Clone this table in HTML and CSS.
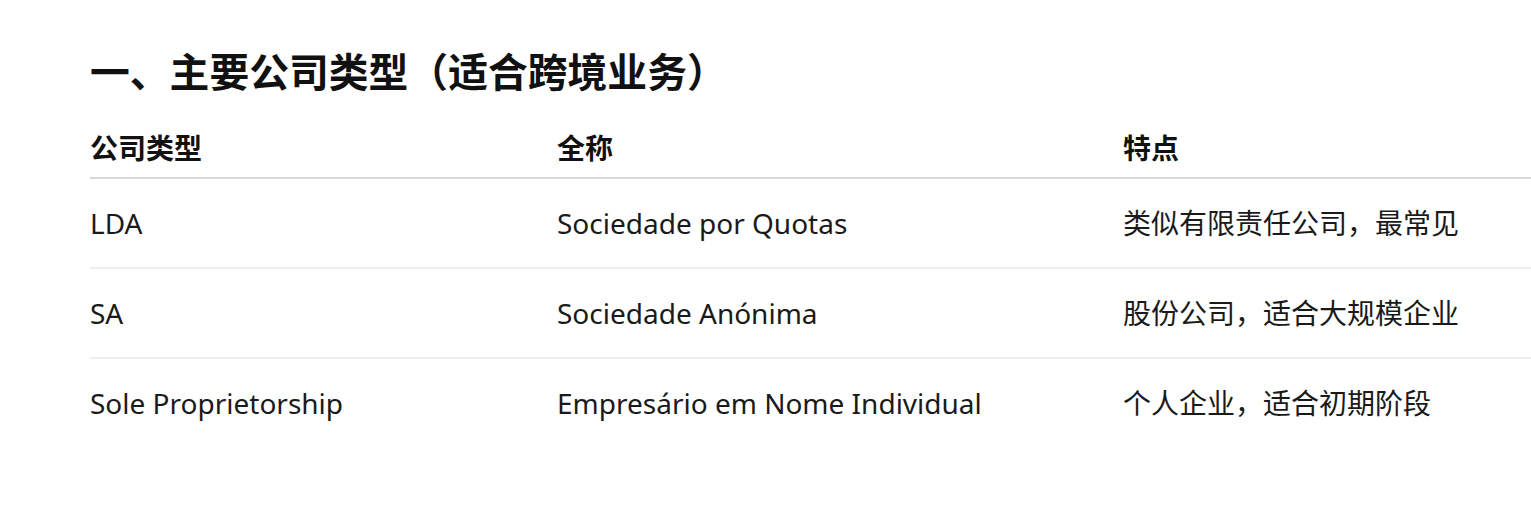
FILE: index.html
```html
<!DOCTYPE html>
<html lang="zh-CN">
<head>
<meta charset="utf-8">
<title>主要公司类型</title>
<link rel="stylesheet" href="styles.css">
</head>
<body>
<main class="page">
  <h2 class="title">一、主要公司类型（适合跨境业务）</h2>
  <div class="table">
    <div class="row head">
      <div class="cell">公司类型</div>
      <div class="cell">全称</div>
      <div class="cell">特点</div>
    </div>
    <div class="row">
      <div class="cell">LDA</div>
      <div class="cell">Sociedade por Quotas</div>
      <div class="cell">类似有限责任公司，最常见</div>
    </div>
    <div class="row">
      <div class="cell">SA</div>
      <div class="cell">Sociedade Anónima</div>
      <div class="cell">股份公司，适合大规模企业</div>
    </div>
    <div class="row last">
      <div class="cell">Sole Proprietorship</div>
      <div class="cell">Empresário em Nome Individual</div>
      <div class="cell">个人企业，适合初期阶段</div>
    </div>
  </div>
</main>
</body>
</html>
```

FILE: styles.css
```css
html, body {
  margin: 0;
  padding: 0;
  background: #ffffff;
  overflow: hidden;
}
body {
  font-family: "Noto Sans", "Noto Sans CJK SC", sans-serif;
  color: #1a1a1a;
  text-spacing-trim: space-all;
}
.page {
  padding: 46px 0 0 90px;
}
.title {
  margin: 0;
  font-size: 39.8px;
  line-height: 52px;
  font-weight: 700;
  color: #111111;
}
.table {
  margin-top: 29px;
  width: 1460px;
}
.row {
  display: grid;
  grid-template-columns: 467px 566px 1fr;
  border-bottom: 2px solid #efefef;
}
.row.head {
  border-bottom-color: #d9d9d9;
}
.row.last {
  border-bottom: none;
}
.cell {
  font-size: 28px;
  line-height: 42px;
  padding: 23px 0;
  white-space: nowrap;
}
.head .cell {
  font-weight: 700;
  color: #111111;
  padding: 0 0 8px;
}
```
